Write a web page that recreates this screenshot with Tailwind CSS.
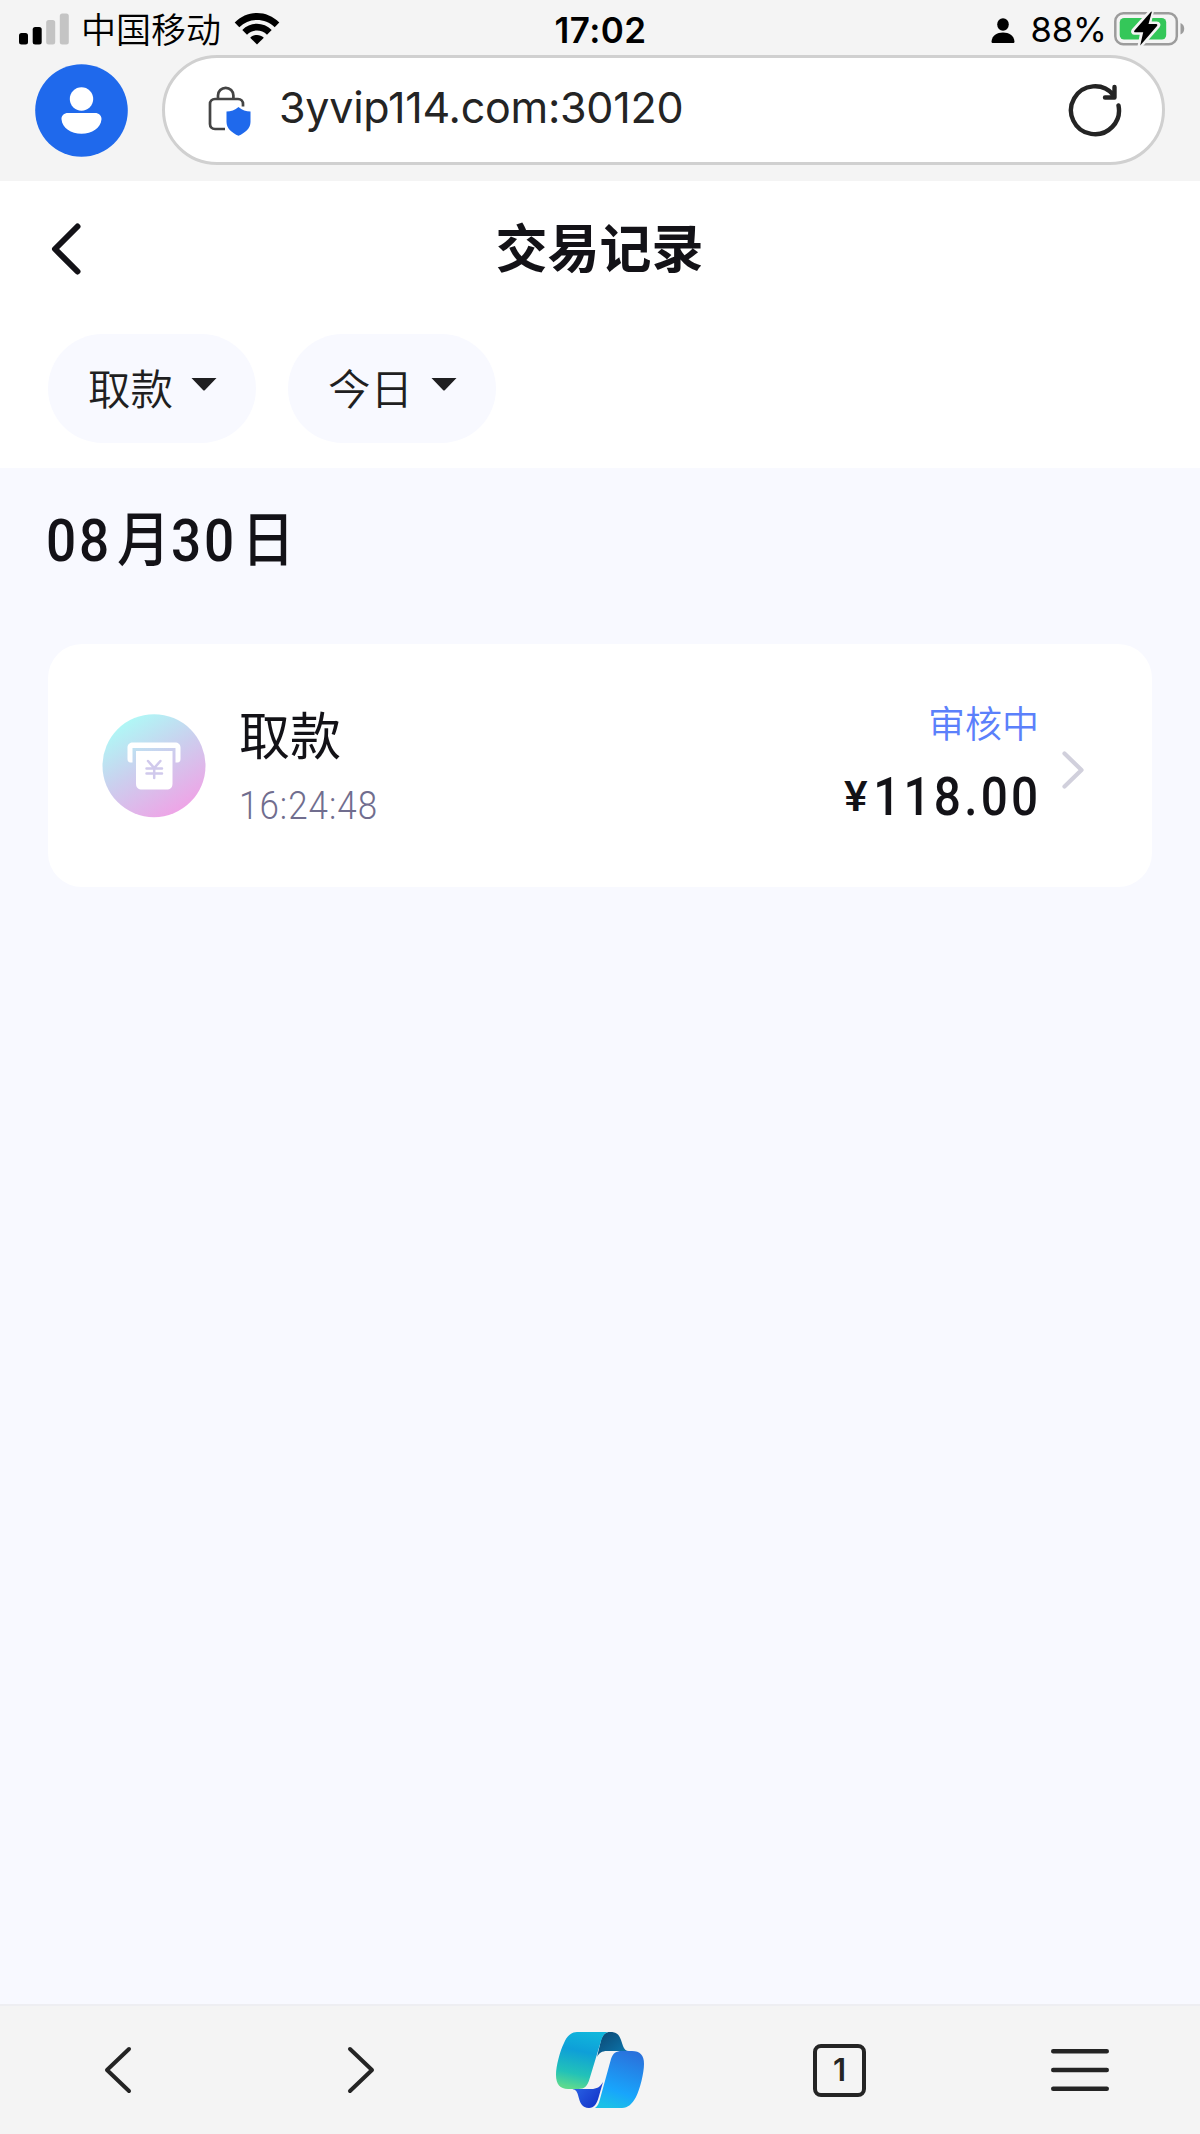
<!DOCTYPE html>
<html lang="zh-CN">
<head>
<meta charset="utf-8">
<title>交易记录</title>
<script src="https://cdn.jsdelivr.net/npm/@tailwindcss/browser@4"></script>
</head>
<body class="flex h-[2134px] w-[1200px] flex-col overflow-hidden bg-[#f8f9ff] font-['Inter','Noto_Sans_CJK_SC',sans-serif] text-[#131217]">

<header class="h-[181px] shrink-0 bg-[#f4f4f4]">
  <div class="flex h-[55px] items-center pt-[3px] pr-[14px] pl-[19px] text-black">
    <div class="flex flex-1 items-center">
      <svg class="h-[32px] w-[50px]" viewBox="0 0 50 32"><rect x="0" y="20" width="9" height="11.500" rx="2.500"/><rect x="13.700" y="14" width="9" height="17.500" rx="2.500"/><g fill="#c4c4c4"><rect x="27.200" y="7" width="9" height="24.500" rx="2.500"/><rect x="40.800" y="0.500" width="9" height="31" rx="2.500"/></g></svg>
      <span class="ml-[12px] pt-[2px] text-[35px] leading-[52px] font-[350]">中国移动</span>
      <svg class="mb-[2px] ml-[13px] h-[34px] w-[46px]" viewBox="0 0 46 34"><path d="M.7 11.500C13-1.300 33-1.300 45.300 11.500l-4.600 4.700C31 6.700 15 6.700 5.300 16.200Z"/><path d="M8.300 19c8.200-8.200 21.200-8.200 29.400 0L33 23.700c-5.600-5.500-14.400-5.500-20 0Z"/><path d="M16.200 26.700c3.900-3.600 9.700-3.600 13.600 0L23 33.500Z"/></svg>
    </div>
    <span class="pt-[2px] pr-[4px] text-[35px] leading-[52px] font-semibold tracking-[.4px]">17:02</span>
    <div class="flex flex-1 items-center justify-end">
      <svg class="mt-[3px] h-[26px] w-[24px]" viewBox="0 0 24 26"><ellipse cx="12" cy="6.500" rx="5.800" ry="6.200"/><path d="M.5 23.500C1 17.500 6 14.500 12 14.500s11 3 11.500 9c0 1-.6 1.500-1.500 1.500H2C1.100 25 .5 24.500.5 23.500Z"/></svg>
      <span class="ml-[15px] pt-[2px] text-[34.500px] leading-[52px]">88%</span>
      <svg class="ml-[7px] h-[36px] w-[72px]" viewBox="0 0 72 36"><rect x="1.300" y="2.300" width="61.500" height="31" rx="8" fill="none" stroke="#9c9c9c" stroke-width="2.500"/><path d="M66.500 12c5 2 5 9.500 0 11.500Z" fill="#9c9c9c"/><rect x="5.700" y="7" width="46.500" height="21.500" rx="4.500" fill="#34c759"/><g transform="translate(0 -1)"><path d="M37.300 1.500 20 20.600c-.8 1-.3 1.700.7 1.700h8L26.200 35.500 43.500 15.800c.8-1 .4-1.900-.8-1.900h-8.200Z" stroke="#f4f4f4" stroke-width="5"/><path d="M37.300 1.500 20.500 20.500c-.8 1-.3 1.800.7 1.800h8L26.200 35.500 43 15.900c.8-1 .4-2-.8-2h-7.700l3.300-12Z"/></g></svg>
    </div>
  </div>
  <div class="flex h-[110px] items-center pr-[35px] pl-[35px]">
    <svg class="h-[93px] w-[93px]" viewBox="0 0 93 93"><circle cx="46.500" cy="46.500" r="46.300" fill="#1f69ec"/><circle cx="46.500" cy="35" r="11.700" fill="#fff"/><path d="M33 49h27c3.800 0 6.700 2.600 6.500 6.200C65.800 64 57 69.700 46.500 69.700S27.200 64 26.500 55.200C26.200 51.600 29.200 49 33 49Z" fill="#fff"/></svg>
    <div class="ml-[34px] flex h-[110px] flex-1 items-center rounded-full border-[3px] border-[#d0d0d0] bg-white pr-[40px] pl-[43px]">
      <svg class="mt-[2px] h-[50px] w-[43px]" viewBox="0 0 43 50" fill="none"><path d="M10 13V9.500a7.700 7.700 0 0 1 15.400 0V13M35 20.500V18c0-3-2-5-5-5H7c-3 0-5 2-5 5v20c0 3 2 5 5 5h10" stroke="#444" stroke-width="2.700"/><path d="M30.500 21c3.500 3 7.600 4.500 12 4.600V36c0 6.300-5.500 11-12 13.800C24 47 18.500 42.300 18.500 36V25.600c4.400-.1 8.500-1.600 12-4.600Z" fill="#1f69ec"/></svg>
      <span class="ml-[28px] pb-[6px] text-[43px] leading-[60px] tracking-[-.25px] text-[#242424]">3yvip114.com:30120</span>
      <svg class="ml-auto h-[54px] w-[54px]" viewBox="0 0 54 54" fill="none" stroke="#242424" stroke-width="4.400" stroke-linecap="round" stroke-linejoin="round"><path d="M50.500 22.500a24 24 0 1 1-5-10.500M46.500 4v10.500H37"/></svg>
    </div>
  </div>
</header>

<section class="h-[287px] shrink-0 bg-white">
  <div class="flex h-[136px] items-center pl-[51px]">
    <svg class="h-[54px] w-[30px]" viewBox="0 0 30 54" fill="none" stroke="#131217" stroke-width="6" stroke-linecap="round" stroke-linejoin="round"><path d="M26.500 4.500 4 27l22.500 22.500"/></svg>
    <h1 class="mr-[82px] flex-1 pt-[2px] text-center text-[52px] leading-[76px] font-semibold">交易记录</h1>
  </div>
  <div class="mt-[17px] flex gap-[32px] pl-[48px] text-[42.500px] leading-[62px] font-[350] text-[#1f1f21]">
    <div class="flex h-[109px] w-[208px] items-center rounded-full bg-[#f8f9ff] pl-[40px]"><span class="pt-[2px]">取款</span><svg class="mb-[8px] ml-[18px] h-[13px] w-[26px]" viewBox="0 0 26 13" fill="currentColor"><path d="M.5 0h25L14 12c-.7.800-1.300.800-2 0Z"/></svg></div>
    <div class="flex h-[109px] w-[208px] items-center rounded-full bg-[#f8f9ff] pl-[40px]"><span class="pt-[2px]">今日</span><svg class="mb-[8px] ml-[18px] h-[13px] w-[26px]" viewBox="0 0 26 13" fill="currentColor"><path d="M.5 0h25L14 12c-.7.800-1.300.800-2 0Z"/></svg></div>
  </div>
</section>

<main class="flex-1 px-[48px] pt-[28px]">
  <h2 class="-ml-[2px] flex h-[90px] font-['Roboto','Noto_Sans_CJK_SC',sans-serif] text-[59px] leading-[90px] font-medium whitespace-nowrap">
    <span class="w-[65px] origin-left scale-x-90 tracking-[3px]">08</span>
    <span class="w-[60px] origin-right scale-x-90">月</span>
    <span class="w-[65px] origin-left scale-x-90 tracking-[3px]">30</span>
    <span class="w-[56px] origin-right scale-x-90">日</span>
  </h2>
  <article class="mt-[58px] flex h-[243px] w-[1104px] items-center rounded-[34px] bg-white pl-[54px]">
    <svg class="h-[104px] w-[104px]" viewBox="0 0 104 104"><defs><linearGradient id="coin" x1=".2" y1=".08" x2=".75" y2=".97"><stop stop-color="#aff8f6"/><stop offset=".45" stop-color="#cbcfee"/><stop offset="1" stop-color="#f0a2e6"/></linearGradient></defs><circle cx="52" cy="51.700" r="51.500" fill="url(#coin)"/><path d="M31 28.500h42c3.300 0 5.500 2 5.500 5V45c0 2-1 3.500-3 3.500h-2V34h-43v14.500h-2c-2 0-3-1.500-3-3.500V33.500c0-3 2.200-5 5.500-5Z" fill="#fff"/><path d="M34 37h36.500v32.500c0 4-2.200 6-6 6H40c-3.800 0-6-2-6-6Z" fill="#fff"/><path d="m46 47 6.200 7 6.200-7M44.500 54.500h15.500M44.500 59.500h15.500M52.200 54v10" fill="none" stroke="#d0c9ec" stroke-width="2.500" stroke-linecap="round"/></svg>
    <div class="ml-[33px] flex flex-col pt-[7px]">
      <span class="text-[51px] leading-[74px]">取款</span>
      <span class="origin-left scale-x-[.92] font-['Roboto'] text-[38px] leading-[64px] font-light tracking-[1.100px] text-[#706d8e]">16:24:48</span>
    </div>
    <div class="mr-[22px] ml-auto flex flex-col items-end pt-[2px]">
      <span class="text-[37px] leading-[64px] font-[350] text-[#5b80fb]">审核中</span>
      <span class="-mr-[2px] flex origin-right scale-x-90 items-baseline font-['Roboto'] leading-[80px] font-medium tracking-[3.600px] whitespace-nowrap"><span class="relative -top-[4px] mr-[2px] origin-right scale-x-[1.150] text-[43px]">¥</span><span class="text-[53px]">118.00</span></span>
    </div>
    <svg class="mt-[8px] mr-[67px] h-[40px] w-[24px]" viewBox="0 0 24 40" fill="none" stroke="#d1d0dc" stroke-width="4.200" stroke-linecap="round" stroke-linejoin="round"><path d="m3.500 3.500 17 16.500-17 16.500"/></svg>
  </article>
</main>

<nav class="grid h-[130px] shrink-0 grid-cols-5 items-center justify-items-center border-t-2 border-[#eeeef2] bg-[#f4f4f4] text-[#242424]">
  <svg class="mr-[4px] h-[48px] w-[28px]" viewBox="0 0 28 48" fill="none" stroke="currentColor" stroke-width="4" stroke-linecap="round" stroke-linejoin="round"><path d="M25 3 3 24l22 21"/></svg>
  <svg class="ml-[2px] h-[48px] w-[28px]" viewBox="0 0 28 48" fill="none" stroke="currentColor" stroke-width="4" stroke-linecap="round" stroke-linejoin="round"><path d="m3 3 22 21L3 45"/></svg>
  <svg class="h-[76px] w-[88px]" viewBox="0 0 88 76"><defs><linearGradient id="teal" x1=".6" y1="0" x2=".4" y2="1"><stop stop-color="#10b6dc"/><stop offset=".35" stop-color="#0e9fd8"/><stop offset=".75" stop-color="#22c2b8"/><stop offset="1" stop-color="#5cd98f"/></linearGradient><linearGradient id="blue" x1=".65" y1="0" x2=".35" y2="1"><stop stop-color="#2a72dc"/><stop offset=".7" stop-color="#18a5fc"/><stop offset="1" stop-color="#1bc0e7"/></linearGradient><linearGradient id="navy" x1="0" y1="0" x2="1" y2="1"><stop stop-color="#0d4570"/><stop offset="1" stop-color="#0b7db5"/></linearGradient><linearGradient id="indigo" x1="0" y1="0" x2="1" y2=".7"><stop stop-color="#2d6be9"/><stop offset="1" stop-color="#1434c9"/></linearGradient></defs><path d="M41 25 45 8c2-6 5-8 9-8 6 0 9 2 11 8l2 6c1 3 3 5 6 5H51c-5 0-8 2-10 6Z" fill="url(#navy)"/><path d="M15 57c4 0 6 2 7 6 2 8 4 13 11 13 5 0 8-4 10-12l4-14c-3 5-6 7-12 7Z" fill="url(#indigo)"/><path d="M21 0h33c-5 0-7 3-9 9L33.500 47c-2 7-5 10-11 10H12C4 57 0 52 0 43 0 34 4 19 8 11 11 4 15 0 21 0Z" fill="url(#teal)"/><path d="M66 19h10c8 0 12 4 12 13 0 9-4 25-8 33-4 7-8 11-14 11H39c3-2 4-5 5-9L55 27c2-6 5-8 11-8Z" fill="url(#blue)"/></svg>
  <div class="mr-[1px] flex h-[53px] w-[53px] items-center justify-center rounded-[8px] border-4 border-current text-[31px] leading-[40px] font-semibold">1</div>
  <svg class="h-[44px] w-[58px]" viewBox="0 0 58 44" fill="none" stroke="currentColor" stroke-width="4.400" stroke-linecap="round"><path d="M2.200 3.200h53.600M2.200 22h53.600M2.200 40.800h53.600"/></svg>
</nav>
</body>
</html>
